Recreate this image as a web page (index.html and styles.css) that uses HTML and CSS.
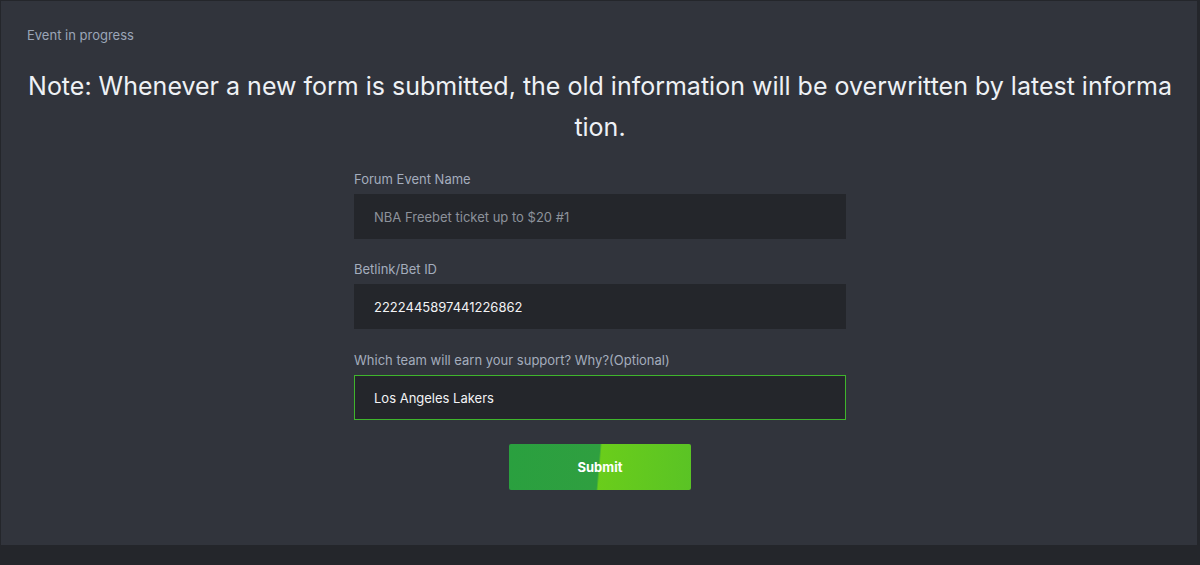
FILE: index.html
```html
<!DOCTYPE html>
<html>
<head>
<meta charset="utf-8">
<link rel="stylesheet" href="styles.css">
</head>
<body>
<div class="panel">
  <div class="status">Event in progress</div>
  <h1 class="note">Note: Whenever a new form is submitted, the old information will be overwritten by latest information.</h1>
  <form class="form">
    <div class="field">
      <label class="label">Forum Event Name</label>
      <div class="input readonly">NBA Freebet ticket up to $20 #1</div>
    </div>
    <div class="field">
      <label class="label">Betlink/Bet ID</label>
      <div class="input">2222445897441226862</div>
    </div>
    <div class="field optional">
      <label class="label">Which team will earn your support? Why?(Optional)</label>
      <div class="input focused">Los Angeles Lakers</div>
    </div>
    <div class="actions">
      <button type="button" class="submit">Submit</button>
    </div>
  </form>
</div>
</body>
</html>
```
FILE: styles.css
```css
html, body {
  margin: 0;
  padding: 0;
}
body {
  background: #24262b;
  font-family: Inter, "Noto Sans", sans-serif;
  height: 565px;
  overflow: hidden;
}
.panel {
  background: #31343c;
  margin: 1px 3px 0 1px;
  height: 544px;
  padding: 26px 24px 0 26px;
  box-sizing: border-box;
}
.status {
  font-size: 13px;
  line-height: 16px;
  color: #9ba6b8;
}
.note {
  margin: 23px 0 0 0;
  font-size: 25px;
  font-weight: 400;
  line-height: 41px;
  color: #eef1f5;
  text-align: center;
  word-break: break-all;
}
.form {
  width: 492px;
  margin: 23px auto 0 auto;
  display: flex;
  flex-direction: column;
}
.field {
  display: flex;
  flex-direction: column;
  gap: 7px;
  margin-bottom: 22px;
}
.field.optional {
  margin-top: 1px;
}
.label {
  font-size: 13px;
  line-height: 16px;
  color: #a4adbd;
}
.input {
  height: 45px;
  box-sizing: border-box;
  background: #24262b;
  border: 1px solid #24262b;
  padding: 0 19px;
  display: flex;
  align-items: center;
  font-size: 13px;
  color: #f2f3f5;
}
.input.readonly {
  color: #8d929b;
}
.input.focused {
  border-color: #3fb52c;
}
.actions {
  display: flex;
  justify-content: center;
  margin-top: 2px;
}
.submit {
  width: 182px;
  height: 46px;
  border: 0;
  border-radius: 2px;
  font-family: Inter, "Noto Sans", sans-serif;
  font-size: 13px;
  font-weight: 700;
  color: #ffffff;
  background: linear-gradient(95deg, #2aa03f 0%, #2f9f40 49%, #6acd1b 50%, #5ac325 100%);
}
```
